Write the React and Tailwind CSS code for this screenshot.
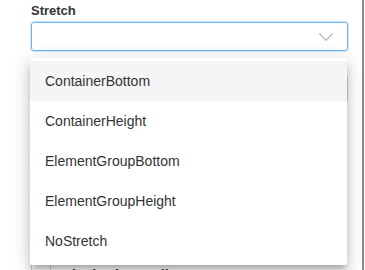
import { ChevronDown } from 'lucide-react';

const options = ['ContainerBottom', 'ContainerHeight', 'ElementGroupBottom', 'ElementGroupHeight', 'NoStretch'];

const App = () => {
  return (
    <div className="relative w-[365px] h-[270px] overflow-hidden bg-white text-[#333]" style={{ fontFamily: '"Liberation Sans", Arial, sans-serif' }}>
      <div className="absolute right-[1px] top-0 h-full w-[2px] bg-[#8a8a8a]" />
      <div className="pl-[31px] pr-[17px] pt-[3px]">
        <div className="text-[13px] font-bold leading-[16px] text-[#333]">Stretch</div>
        <div className="mt-[3px] h-[29px] rounded-[3px] border border-[#6db6f5] shadow-[0_0_0_1px_#cfe6fb] flex items-center justify-end pr-[8px]">
          <ChevronDown className="w-[26px] h-[26px] text-[#b8b8b8]" strokeWidth={1} />
        </div>
        <div className="mt-[23px] h-[29px] rounded-[3px] border border-[#cfcfcf]" />
        <div className="mt-[160px] flex h-[30px] border-l border-[#cfcfcf]">
          <div className="w-[19px] border-r border-[#cfcfcf]" />
          <div className="pl-[11px] pt-[2px] text-[14px] font-bold">Blank when null</div>
        </div>
      </div>
      <div className="absolute left-[30px] top-[58px] w-[317px] bg-white pt-[3px] pb-[4px] rounded-[2px] shadow-[0_5px_5px_-3px_rgba(0,0,0,0.2),0_8px_10px_1px_rgba(0,0,0,0.14),0_3px_22px_2px_rgba(0,0,0,0.12)]">
        {options.map((option, i) => (
          <div key={option} className={`h-[40px] flex items-center pl-[15px] text-[14px] text-[#333] ${i === 0 ? 'bg-[#f5f5f5]' : ''}`}>
            {option}
          </div>
        ))}
      </div>
    </div>
  );
};

export default App;
